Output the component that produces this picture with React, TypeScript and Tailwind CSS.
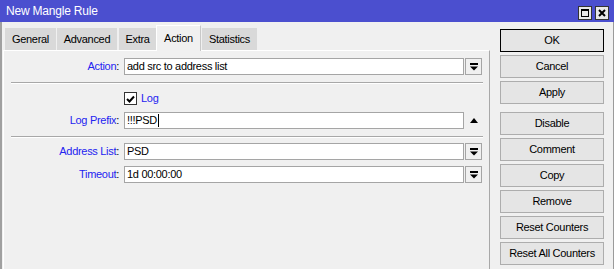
import type { ReactNode } from "react";

function DropIcon() {
  return (
    <svg width="8" height="8" viewBox="0 0 8 8">
      <rect x="0" y="0" width="8" height="2" fill="#000" />
      <path d="M0 3.5 H8 L4 7.5 Z" fill="#000" />
    </svg>
  );
}

function Row({ label, children }: { label: string; children: ReactNode }) {
  return (
    <div className="flex h-[17px] items-center">
      <div className="w-[116px] pr-[1px] text-right">
        <span className="text-[#2323f0]">{label}</span>
        <span>:</span>
      </div>
      <div className="ml-[4px] flex items-center">{children}</div>
    </div>
  );
}

function Field({ value, cursor }: { value: string; cursor?: boolean }) {
  return (
    <div className="flex h-[17px] w-[340px] items-center border border-[#a5a5a5] bg-white pl-[2px]">
      <span>{value}</span>
      {cursor && <span className="ml-[1px] h-[13px] w-px bg-black" />}
    </div>
  );
}

function DropButton() {
  return (
    <div className="ml-[1px] flex h-[17px] w-[17px] items-center justify-center border border-[#a5a5a5] bg-[#f0f0f0]">
      <DropIcon />
    </div>
  );
}

function Separator() {
  return (
    <div className="ml-[7px] mr-[6px] h-[2px] border-t border-[#a8a8a8] bg-white" />
  );
}

const tabs = [
  { name: "General", w: "w-[51px]" },
  { name: "Advanced", w: "w-[60px]" },
  { name: "Extra", w: "w-[37px]" },
];

export default function App() {
  return (
    <div
      className="flex h-[269px] w-[614px] flex-col overflow-hidden bg-[#f0f0f0] text-[11px] tracking-[-0.3px] text-black"
      style={{ fontFamily: '"Liberation Sans", Arial, sans-serif' }}
    >
      {/* title bar */}
      <div className="flex h-[22px] shrink-0 items-center bg-[#4b4fcf] pl-[6px] pr-[5px]">
        <span className="text-[12px] tracking-[-0.2px] text-white">New Mangle Rule</span>
        <div className="ml-auto flex gap-[3px] pt-[3px]">
          <div className="flex h-[14px] w-[14px] items-center justify-center border border-[#333] bg-[#e8e8e8]">
            <div className="h-[8px] w-[8px] border border-black border-t-2" />
          </div>
          <div className="flex h-[14px] w-[14px] items-center justify-center border border-[#333] bg-[#e8e8e8]">
            <svg width="8" height="8" viewBox="0 0 8 8">
              <path d="M1 1 L7 7 M7 1 L1 7" stroke="#000" strokeWidth="2" />
            </svg>
          </div>
        </div>
      </div>

      {/* body */}
      <div className="flex flex-1 border-l-[2px] border-r border-l-[#a0a0a0] border-r-[#9a9a9a] pr-[3px]">
        <div className="ml-px flex w-[487px] flex-col">
          {/* tabs */}
          <div className="flex h-[28px] shrink-0 items-end pl-[2px]">
            {tabs.map((t, i) => (
              <div
                key={t.name}
                className={`${t.w} ${i === 0 ? "" : i === 1 ? "ml-px" : "ml-[2px]"} flex h-[22px] items-center justify-center bg-[#d9d9d9]`}
              >
                {t.name}
              </div>
            ))}
            <div className="relative z-10 -mb-px flex h-[26px] w-[45px] items-start justify-center border-l border-r border-t border-l-white border-r-[#c8c8c8] border-t-white bg-[#f0f0f0] pt-[4px]">
              Action
            </div>
            <div className="ml-px flex h-[22px] w-[55px] items-center justify-center bg-[#d9d9d9]">
              Statistics
            </div>
          </div>

          {/* panel */}
          <div className="flex flex-1 flex-col border-l border-r border-t border-l-white border-r-[#a8a8a8] border-t-white pt-[7px]">
            <Row label="Action">
              <Field value="add src to address list" />
              <DropButton />
            </Row>
            <div className="mt-[7px]">
              <Separator />
            </div>
            <div className="mt-[8px] flex h-[13px] items-center pl-[120px]">
              <div className="flex h-[13px] w-[13px] items-center justify-center border border-[#333] bg-white">
                <svg width="9" height="8" viewBox="0 0 9 8">
                  <path d="M1 4 L3.5 6.5 L8 1.5" stroke="#000" strokeWidth="2" fill="none" />
                </svg>
              </div>
              <span className="ml-[4px] text-[#2323f0]">Log</span>
            </div>
            <div className="mt-[7px]">
              <Row label="Log Prefix">
                <Field value="!!!PSD" cursor />
                <div className="ml-[1px] flex h-[17px] w-[17px] items-center justify-center">
                  <svg width="8" height="5" viewBox="0 0 8 5">
                    <path d="M0 5 H8 L4 0 Z" fill="#000" />
                  </svg>
                </div>
              </Row>
            </div>
            <div className="mt-[7px]">
              <Separator />
            </div>
            <div className="mt-[5px]">
              <Row label="Address List">
                <Field value="PSD" />
                <DropButton />
              </Row>
            </div>
            <div className="mt-[6px]">
              <Row label="Timeout">
                <Field value="1d 00:00:00" />
                <DropButton />
              </Row>
            </div>
          </div>
        </div>

        {/* buttons */}
        <div className="ml-[10px] flex w-[104px] flex-col gap-[3px] pt-[7px]">
          <button className="h-[23px] border border-black bg-[#e5e5e5]">OK</button>
          <button className="h-[23px] border border-[#adadad] bg-[#e5e5e5]">Cancel</button>
          <button className="h-[23px] border border-[#adadad] bg-[#e5e5e5]">Apply</button>
          <button className="mt-[5px] h-[23px] border border-[#adadad] bg-[#e5e5e5]">Disable</button>
          <button className="h-[23px] border border-[#adadad] bg-[#e5e5e5]">Comment</button>
          <button className="h-[23px] border border-[#adadad] bg-[#e5e5e5]">Copy</button>
          <button className="h-[23px] border border-[#adadad] bg-[#e5e5e5]">Remove</button>
          <button className="h-[23px] border border-[#adadad] bg-[#e5e5e5]">Reset Counters</button>
          <button className="h-[23px] border border-[#adadad] bg-[#e5e5e5]">Reset All Counters</button>
        </div>
      </div>
    </div>
  );
}
